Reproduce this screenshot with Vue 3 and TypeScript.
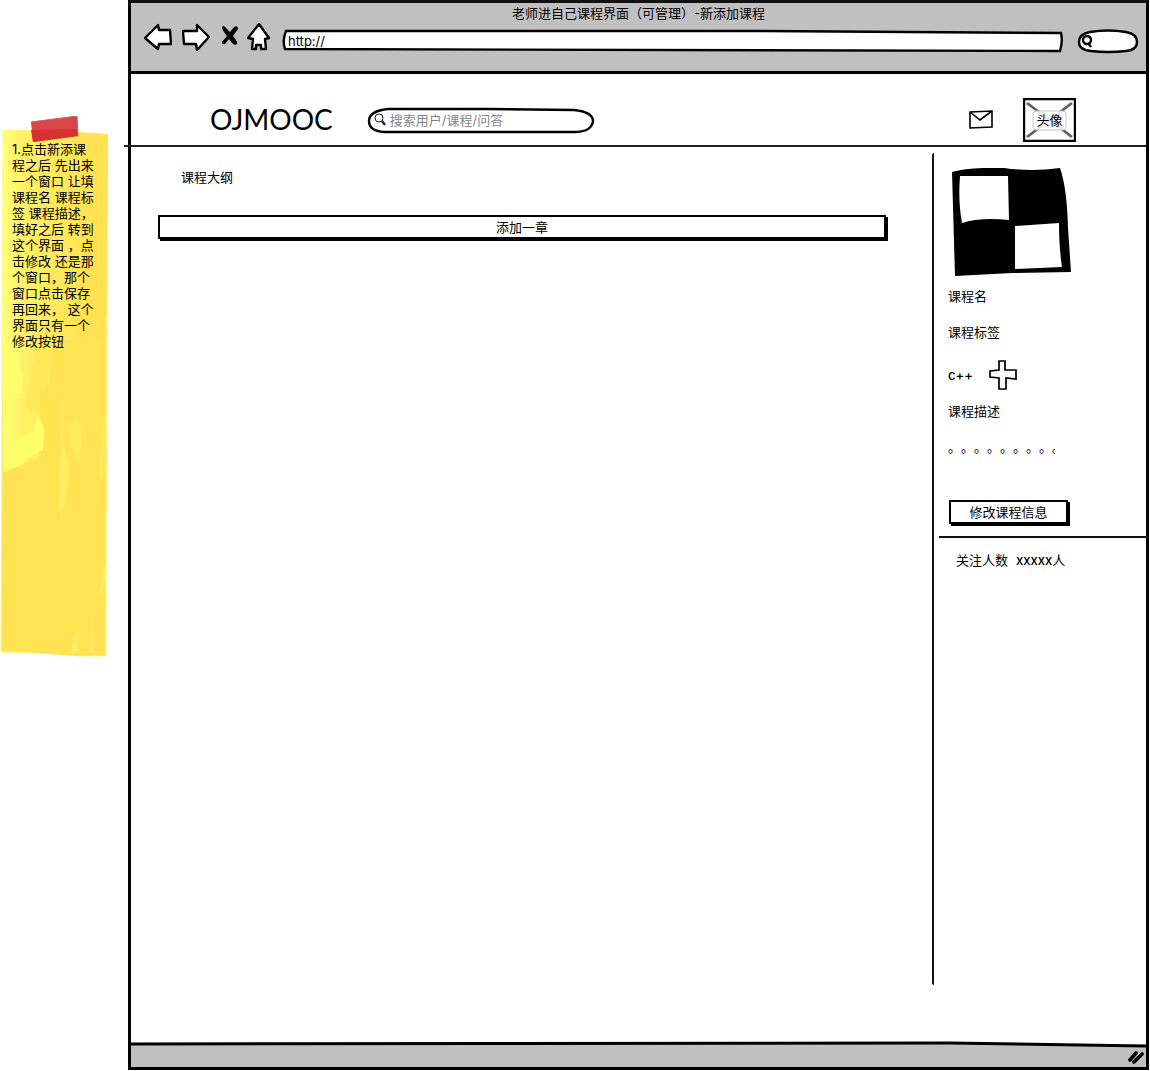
<script setup lang="ts">
import { ref } from 'vue'

const address = ref('http://')
const quickSearch = ref('')
const query = ref('')

const noteLines: string[] = [
  '1.点击新添课',
  '程之后 先出来',
  '一个窗口 让填',
  '课程名 课程标',
  '签 课程描述，',
  '填好之后 转到',
  '这个界面 ，点',
  '击修改 还是那',
  '个窗口，那个',
  '窗口点击保存',
  '再回来， 这个',
  '界面只有一个',
  '修改按钮',
]
</script>

<template>
  <div class="page">
    <aside class="notes">
      <div class="note">
        <svg class="paper" viewBox="0 0 108 542" preserveAspectRatio="none" aria-hidden="true">
          <defs>
            <linearGradient id="sheen" x1="0" x2="1" y1="0" y2="0">
              <stop offset="0" stop-color="#ffff78" />
              <stop offset="0.2" stop-color="#fff066" />
              <stop offset="0.6" stop-color="#ffe75c" />
              <stop offset="0.8" stop-color="#ffe252" />
            </linearGradient>
          </defs>
          <path d="M3 14 L60 15 L108 18 L107 130 L106 540 L76 540 L34 537 L1 536 L2 290 Z" fill="#ffe352" />
          <path d="M3 14 L108 18 L107 240 L54 240 L40 270 L40 342 L3 356 Z" fill="url(#sheen)" />
          <path d="M52 224 L107 224 L107 400 L40 400 L38 290 Z" fill="#ffe352" />
          <path d="M3 224 H16 L23 264 L22 276 L12 280 L8 310 L3 312 Z" fill="#ffff6b" />
          <path d="M6 342 L12 332 L16 324 L34 314 L38 298 L44 312 L43 334 L28 342 L20 350 L5 354 Z" fill="#ffff6b" />
          <path d="M40 224 L52 224 L50 266 L40 280 L40 300 L26 290 L30 260 Z" fill="#ffe95a" />
          <path d="M62 272 L64 290 L63 326 L70 350 L66 380 L61 404 L58 384 L61 330 Z" fill="#ffed60" />
          <path d="M66 310 L78 300 L82 316 L79 348 L72 334 Z M99 345 L105 300 L105 350 L101 366 Z" fill="#ffea5b" />
          <path d="M105 446 L99 476 L102 480 L105 462 Z M92 500 L90 535 L93 537 Z M74 520 L78 516 L79 537 L71 538 Z" fill="#ffee64" />
          <path d="M3 14 L2 290 L1 536 L34 537 M76 540 L106 540 L106 200" fill="none" stroke="#fff98a" />
          <path d="M31 6 L77 0 L78 20 L33 26 Z" fill="#dc4545" />
          <path d="M31 14 L77 13 L78 20 L33 26 Z" fill="#d83030" />
          <path d="M31 6 L77 0 L78 20" fill="none" stroke="#b06a60" />
        </svg>
        <p class="note-text">
          <span v-for="line in noteLines" :key="line">{{ line }}</span>
        </p>
      </div>
    </aside>

    <div class="window">
      <div class="chrome">
        <p class="title">老师进自己课程界面（可管理）-新添加课程</p>
        <div class="toolbar">
          <button class="tool back" aria-label="后退">
            <svg width="28" height="28" viewBox="0 0 28 28">
              <path d="M1 15 L14 2 L15 7 L26 7 L27 21 L15 21 L14 26 Z" class="ink" />
            </svg>
          </button>
          <button class="tool forward" aria-label="前进">
            <svg width="28" height="28" viewBox="0 0 28 28">
              <path d="M1 8 L15 8 L15 2 L27 14 L15 27 L14 21 L2 21 Z" class="ink" />
            </svg>
          </button>
          <button class="tool stop" aria-label="停止">
            <svg width="18" height="28" viewBox="0 0 18 28">
              <path d="M4 4 L9 9 L13 4 Q17 2 17 6 L12 13 Q17 19 16 21 Q14 23 11 20 L8 16 L4 21 Q1 22 1 19 L6 13 Q1 7 1 4 Q2 2 4 4 Z" />
            </svg>
          </button>
          <button class="tool home" aria-label="主页">
            <svg width="24" height="28" viewBox="0 0 24 28">
              <path d="M12 1 L1 15 L6 16 L5 26 L9 26 L9 22 L14 22 L14 26 L19 26 L18 16 L22 15 Z" class="ink" />
            </svg>
          </button>
          <label class="field url">
            <svg class="shape" viewBox="0 0 780 22" preserveAspectRatio="none" aria-hidden="true">
              <path d="M3 1 L470 1 L778 3 Q780 11 777 21 L2 19 Q-1 10 3 1 Z" />
            </svg>
            <input v-model="address" type="text" aria-label="地址" />
          </label>
          <label class="field pill">
            <svg class="shape" viewBox="0 0 60 24" preserveAspectRatio="none" aria-hidden="true">
              <path d="M12 3 Q30 0 48 3 Q59 5 59 13 Q59 21 48 22 Q30 24 13 22 Q1 21 1 13 Q1 5 12 3 Z" />
            </svg>
            <svg class="lens" width="14" height="14" viewBox="0 0 14 14" aria-hidden="true">
              <circle cx="7" cy="6" r="4" class="ink" />
              <path d="M8 9 L11 13" class="ink" />
            </svg>
            <input v-model="quickSearch" type="text" aria-label="搜索" />
          </label>
        </div>
      </div>

      <header class="header">
        <a class="logo" href="#">OJMOOC</a>
        <label class="field search">
          <svg class="shape" viewBox="0 0 226 26" preserveAspectRatio="none" aria-hidden="true">
            <path d="M20 2 L120 2 L206 3 Q225 5 225 14 Q224 25 206 25 L16 25 Q1 24 1 14 Q1 4 20 2 Z" />
          </svg>
          <svg class="lens" width="14" height="14" viewBox="0 0 14 14" aria-hidden="true">
            <circle cx="5" cy="5" r="4" fill="none" stroke="#222" />
            <path d="M8 8 L11 12" stroke="#222" stroke-width="2.4" />
          </svg>
          <input v-model="query" type="text" placeholder="搜索用户/课程/问答" aria-label="搜索用户/课程/问答" />
        </label>
        <a class="mail" href="#" aria-label="消息">
          <svg width="24" height="20" viewBox="0 0 24 20">
            <path d="M1 2 L23 1 L23 17 L1 18 Z M1 2 L11 10 L23 1" fill="#fff" stroke="#000" stroke-width="1.6" />
          </svg>
        </a>
        <a class="avatar" href="#">
          <svg class="shape" viewBox="0 0 53 44" aria-hidden="true">
            <path d="M1 1 H52 V43 H1 Z" fill="#fff" stroke="#000" stroke-width="2.4" />
            <path d="M4 5 L49 39 M49 5 L4 39" stroke="#606060" stroke-width="2.8" />
            <rect x="10" y="13" width="33" height="19" rx="3" fill="#fff" fill-opacity="0.85" stroke="#c4c4c4" />
          </svg>
          <span>头像</span>
        </a>
      </header>

      <div class="body">
        <main class="outline">
          <h1>课程大纲</h1>
          <button class="box-button wide">添加一章</button>
        </main>

        <section class="course">
          <div class="info">
            <svg class="cover" width="120" height="108" viewBox="0 0 120 108" role="img" aria-label="课程封面">
              <path d="M0 4 Q18 -1 52 0 Q80 4 108 0 Q115 20 116 60 L119 104 L60 105 L3 108 Z" />
              <path d="M8 8 L56 8 L57 52 Q28 49 10 55 Q6 34 8 8 Z M63 58 L107 55 Q107 80 110 99 L63 101 Z" fill="#fff" />
            </svg>
            <h2 class="name">课程名</h2>
            <h2 class="tags">课程标签</h2>
            <div class="tag-row">
              <span class="latin">c++</span>
              <button class="tool" aria-label="添加标签">
                <svg width="28" height="32" viewBox="0 0 28 32">
                  <path d="M10 2 H16 V11 L27 11 V20 L17 19 L17 30 H10 L10 19 L1 18 L1 12 L10 11 Z" fill="#fff" stroke="#000" stroke-width="1.7" />
                </svg>
              </button>
            </div>
            <h2 class="about">课程描述</h2>
            <p class="description">。。。。。。。。。</p>
            <button class="box-button edit">修改课程信息</button>
          </div>
          <p class="followers">
            <span>关注人数</span>
            <span><b>xxxxx</b>人</span>
          </p>
        </section>
      </div>

      <footer class="status">
        <svg class="rim" viewBox="0 0 1016 6" preserveAspectRatio="none" aria-hidden="true">
          <path d="M0 0 H1016 V4 L820 1 L0 2 Z" fill="#fff" />
          <path d="M0 2 L820 1 L1016 4" />
        </svg>
        <svg width="16" height="14" viewBox="0 0 16 14" aria-hidden="true">
          <path d="M2 10 L8 3 M6 12 L14 4" stroke="#000" stroke-width="3.6" stroke-linecap="round" />
        </svg>
      </footer>
    </div>
  </div>
</template>

<style>
body {
  margin: 0;
  background: #fff;
}
</style>

<style scoped>
.page {
  display: flex;
  box-sizing: border-box;
  min-height: 100vh;
  padding: 0 1px 1px 0;
  color: #000;
  font: 13px/20px Inter, "Noto Sans CJK SC", sans-serif;
  text-spacing-trim: space-all;
}

p,
h1,
h2 {
  margin: 0;
  font-size: 13px;
  font-weight: 400;
}

a {
  color: inherit;
  text-decoration: none;
}

button,
input {
  margin: 0;
  padding: 0;
  border: 0;
  background: none;
  color: inherit;
  font: inherit;
}

svg {
  display: block;
}

.ink {
  fill: #fff;
  stroke: #000;
  stroke-width: 2.4;
  stroke-linejoin: round;
}

.notes {
  flex: 0 0 128px;
  padding-top: 116px;
}

.note {
  position: relative;
  width: 108px;
  height: 542px;
}

.paper,
.shape {
  position: absolute;
  inset: 0;
  width: 100%;
  height: 100%;
}

.note-text {
  position: relative;
  padding: 25px 0 0 12px;
  line-height: 16px;
  white-space: pre;
}

.note-text span {
  display: block;
}

.window {
  display: flex;
  flex: 1;
  flex-direction: column;
  min-width: 0;
  border: 3px solid #000;
  border-top-color: #111;
}

.chrome {
  height: 68px;
  border-bottom: 3px solid #000;
  background: #c0c0c0;
}

.title {
  text-align: center;
}

.toolbar {
  display: flex;
  align-items: center;
  height: 28px;
  padding: 0 8px 0 13px;
}

.tool {
  display: block;
}

.forward {
  margin-left: 10px;
}

.stop {
  margin-left: 11px;
}

.home {
  margin-left: 8px;
}

.field {
  position: relative;
  display: flex;
  align-items: center;
}

.field input {
  position: relative;
  flex: 1;
  min-width: 0;
  outline: 0;
}

.field .shape {
  overflow: visible;
}

.field .shape path {
  fill: #fff;
  stroke: #000;
  stroke-width: 2.4;
  vector-effect: non-scaling-stroke;
}

.lens {
  position: relative;
}

.url {
  flex: 1;
  height: 22px;
  margin: 8px 15px 0 12px;
  padding-left: 5px;
}

.url input {
  height: 18px;
}

.pill {
  width: 60px;
  height: 24px;
  margin-top: 8px;
}

.pill .lens {
  margin-left: 2px;
}

.header {
  position: relative;
  display: flex;
  align-items: center;
  height: 52px;
  padding: 20px 70px 0 79px;
}

.header::after {
  position: absolute;
  right: 0;
  bottom: -1px;
  left: -7px;
  height: 2px;
  background: #222;
  content: "";
}

.logo {
  padding-bottom: 2px;
  font: 28px/32px Lato, sans-serif;
}

.search {
  width: 226px;
  height: 26px;
  margin-left: 35px;
}

.search .lens {
  margin: 0 2px 0 6px;
}

.search input::placeholder {
  color: #85858f;
  opacity: 1;
}

.mail {
  margin-left: auto;
}

.avatar {
  position: relative;
  width: 53px;
  height: 44px;
  margin-left: 30px;
  line-height: 44px;
  text-align: center;
}

.avatar span {
  position: relative;
}

.body {
  display: flex;
  flex: 1;
}

.outline {
  flex: 1;
  padding: 21px 46px 0 27px;
}

.outline h1 {
  padding-left: 23px;
}

.box-button {
  display: block;
  box-sizing: border-box;
  height: 24px;
  border: 2px solid #000;
  background: #fff;
  box-shadow: 2px 2px 0 #000;
}

.wide {
  width: 100%;
  margin-top: 28px;
}

.course {
  box-sizing: border-box;
  width: 214px;
  margin: 7px 0 58px;
  border-left: 2px solid #111;
  border-radius: 2px;
}

.info {
  padding: 15px 0 12px 14px;
}

.cover {
  margin-left: 4px;
}

.name,
.about {
  margin-top: 10px;
}

.tags,
.description {
  margin-top: 16px;
}

.tag-row {
  display: flex;
  align-items: center;
  gap: 16px;
  margin-top: 17px;
}

.latin,
b {
  font-weight: 500;
}

.description {
  width: 107px;
  overflow: hidden;
  white-space: nowrap;
}

.edit {
  width: 119px;
  margin: 43px 0 0 1px;
}

.followers {
  display: flex;
  gap: 8px;
  margin: 0 -3px 0 5px;
  padding: 12px 0 0 17px;
  border-top: 2px solid #111;
}

.status {
  position: relative;
  display: flex;
  align-items: center;
  justify-content: flex-end;
  height: 24px;
  padding: 4px 2px 0 0;
  box-sizing: border-box;
  background: #c0c0c0;
}

.rim {
  position: absolute;
  top: -1px;
  left: 0;
  width: 100%;
  height: 6px;
  overflow: visible;
}

.rim path + path {
  fill: none;
  stroke: #000;
  stroke-width: 3;
  vector-effect: non-scaling-stroke;
}
</style>
